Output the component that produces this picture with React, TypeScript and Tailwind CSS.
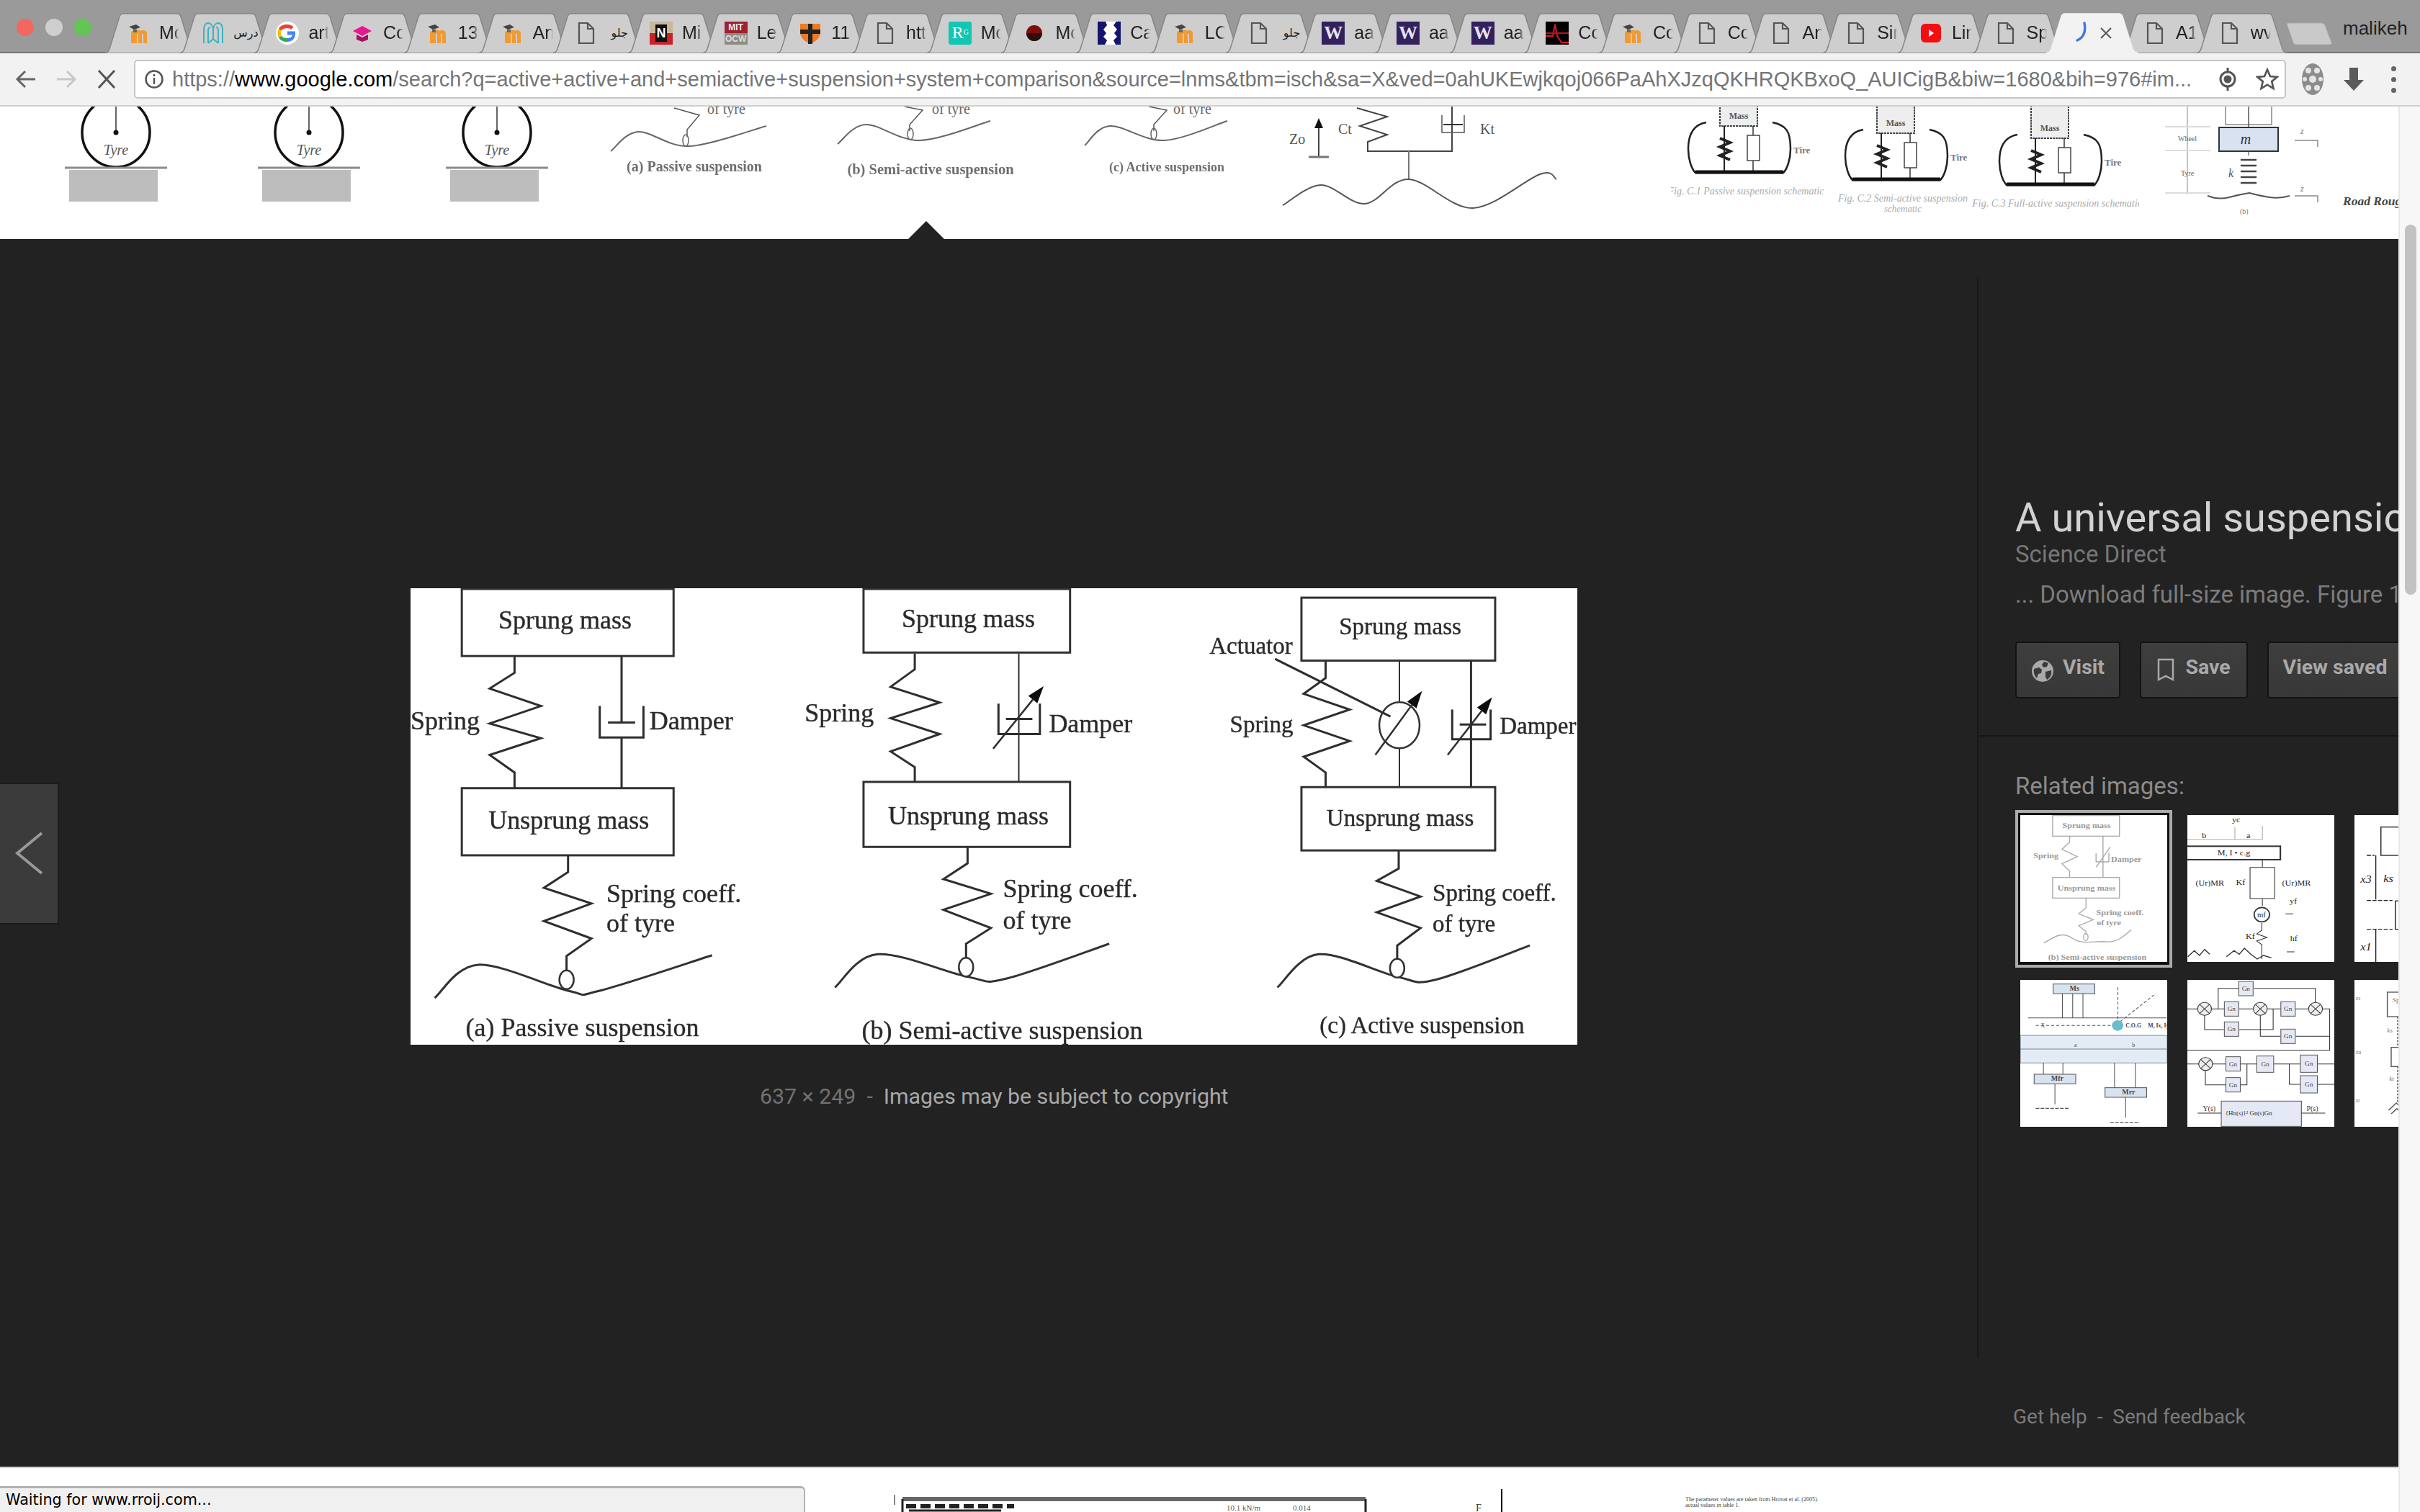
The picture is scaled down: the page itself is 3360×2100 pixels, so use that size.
import type { ReactNode } from 'react'

const SANS = "font-['Liberation_Sans','DejaVu_Sans',sans-serif]"

const pageUrl = '/search?q=active+active+and+semiactive+suspension+system+comparison&source=lnms&tbm=isch&sa=X&ved=0ahUKEwjkqoj066PaAhXJzqQKHRQKBxoQ_AUICigB&biw=1680&bih=976#im...'

type TabInfo = { icon: string; label: string; small?: boolean; active?: boolean }

const tabs: TabInfo[] = [
  { icon: 'moodle', label: 'Moodle' },
  { icon: 'arch', label: 'درس', small: true },
  { icon: 'google', label: 'article' },
  { icon: 'hat', label: 'Course' },
  { icon: 'moodle', label: '13' },
  { icon: 'moodle', label: 'An' },
  { icon: 'doc', label: 'جلو', small: true },
  { icon: 'netflix', label: 'Mi' },
  { icon: 'mit', label: 'Lecture' },
  { icon: 'shield', label: '11.' },
  { icon: 'doc', label: 'http' },
  { icon: 'rg', label: 'Mo' },
  { icon: 'dot', label: 'Mo' },
  { icon: 'wave', label: 'Ca' },
  { icon: 'moodle', label: 'LC' },
  { icon: 'doc', label: 'جلو', small: true },
  { icon: 'w', label: 'aa' },
  { icon: 'w', label: 'aa' },
  { icon: 'w', label: 'aa' },
  { icon: 'ecg', label: 'Co' },
  { icon: 'moodle', label: 'Co' },
  { icon: 'doc', label: 'Co' },
  { icon: 'doc', label: 'An' },
  { icon: 'doc', label: 'Sim' },
  { icon: 'yt', label: 'Lin' },
  { icon: 'doc', label: 'Sp' },
  { icon: 'spin', label: '', active: true },
  { icon: 'doc', label: 'A1' },
  { icon: 'doc', label: 'wv' },
]

function Favicon({ kind }: { kind: string }) {
  const box = 'w-[32px] h-[32px] shrink-0'
  switch (kind) {
    case 'moodle':
      return (
        <svg className={box} viewBox="0 0 32 32">
          <path d="M6 30V16c0-3 3-4 5-3 2-2 7-2 8 0 2-2 9-1 9 3v14h-5V17h-2v13h-5V17h-2v13z" fill="#f39a2e" />
          <path d="M3 7l10-3 6 4-9 3z" fill="#444" />
          <path d="M9 10v5h5v-4z" fill="#666" />
        </svg>
      )
    case 'arch':
      return (
        <svg className={box} viewBox="0 0 32 32" fill="none" stroke="#3fb2c0" strokeWidth="2">
          <path d="M3 30V10c0-5 3-8 6-8s6 3 7 8c1-5 4-8 7-8s6 3 6 8v20" />
          <path d="M9 30V12c0-3 2-4 3-4M23 30V12c0-3-2-4-3-4M16 10v14l-7 6M16 24l7 6" />
        </svg>
      )
    case 'google':
      return (
        <svg className={box} viewBox="0 0 32 32">
          <circle cx="16" cy="16" r="16" fill="#fff" />
          <path d="M16 13.500v5h7c-1 3-3.500 4.500-7 4.500V28c6 0 11-4 11-11 0-1-.1-2.500-.3-3.500z" fill="#4285f4" />
          <path d="M7.500 19.500 4 22.500C6 26 10.500 28 16 28v-5c-4 0-7-1-8.500-3.500z" fill="#34a853" />
          <path d="M7 16c0-1 .2-2.500.6-3.500L4 9.500C3 11.500 2.500 13.500 2.500 16s.5 4.500 1.500 6.500l3.500-3c-.3-1-.5-2.500-.5-3.500z" fill="#fbbc05" />
          <path d="M16 9c2 0 4 .8 5 2l3.500-3.500C22.500 5.500 19.500 4 16 4 10.500 4 6 6 4 9.500l3.600 3C9 10.500 12 9 16 9z" fill="#ea4335" />
        </svg>
      )
    case 'hat':
      return (
        <svg className={box} viewBox="0 0 32 32">
          <path d="M16 6 3 13l13 7 13-7z" fill="#e5198e" />
          <path d="M8 18v7l8 3 8-3v-7l-8 4z" fill="#a50f64" />
        </svg>
      )
    case 'netflix':
      return (
        <div className={`${box} bg-[#c9b79c] relative overflow-hidden flex items-center justify-center`}>
          <div className="absolute bottom-0 left-0 w-full h-[16px] bg-[#c9202a]" />
          <div className="relative w-[16px] h-[24px] bg-[#111] text-white text-[18px] leading-[24px] font-bold text-center">N</div>
        </div>
      )
    case 'mit':
      return (
        <div className={`${box} flex flex-col text-center font-bold text-[12px] leading-[16px] ${SANS}`}>
          <div className="h-[16px] bg-[#a3202f] text-[#eee]">MIT</div>
          <div className="h-[16px] bg-[#8d8d80] text-[#ddd]">OCW</div>
        </div>
      )
    case 'shield':
      return (
        <svg className={box} viewBox="0 0 32 32">
          <path d="M2 3h28v12c0 8-7 13-14 16C9 28 2 23 2 15z" fill="#f07a22" />
          <path d="M16 3v28M2 14h28" stroke="#222" strokeWidth="6" />
        </svg>
      )
    case 'rg':
      return (
        <div className={`${box} bg-[#13c6b4] rounded-[3px] text-white font-['Liberation_Serif',serif] text-[24px] leading-[30px] pl-[5px]`}>
          R<span className="text-[10px] align-top">G</span>
        </div>
      )
    case 'dot':
      return (
        <svg className={box} viewBox="0 0 32 32">
          <circle cx="16" cy="16" r="11" fill="#7d0e0e" />
          <path d="M5 16a11 11 0 0 0 22 0z" fill="#3d0808" />
          <path d="M6 20a11 11 0 0 0 20 0l-4-1-3 3-6-1z" fill="#161616" />
        </svg>
      )
    case 'wave':
      return (
        <svg className={box} viewBox="0 0 32 32">
          <rect width="32" height="32" fill="#14146c" />
          <path d="M11 0h15l-4 5 5 6-4 5 4 5-5 5 3 6H10l3-6-5-5 4-5-4-5 5-6z" fill="#fff" />
        </svg>
      )
    case 'w':
      return (
        <div className={`${box} bg-[#33215e] text-[#e6e1ee] text-[26px] leading-[32px] font-bold text-center font-['Liberation_Serif',serif]`}>W</div>
      )
    case 'ecg':
      return (
        <svg className={box} viewBox="0 0 32 32">
          <rect width="32" height="32" fill="#000" />
          <path d="M0 20h10l3-16 3 16 6 9h10" fill="none" stroke="#d8172b" strokeWidth="2" />
          <path d="M0 16h32" stroke="#b5141f" strokeWidth="2" />
        </svg>
      )
    case 'yt':
      return (
        <svg className={box} viewBox="0 0 32 32">
          <rect x="2" y="3" width="28" height="26" rx="6" fill="#f40d12" />
          <path d="M13 11l7 5-7 5z" fill="#fff" />
        </svg>
      )
    case 'spin':
      return (
        <svg className={box} viewBox="0 0 32 32" fill="none">
          <path d="M22 2c2 10 0 20-10 24" stroke="#3e7bd0" strokeWidth="3.500" strokeLinecap="round" />
        </svg>
      )
    default:
      return (
        <svg className={box} viewBox="0 0 32 32" fill="none" stroke="#555" strokeWidth="2.200">
          <path d="M6 2h12l8 8v20H6z" />
          <path d="M18 2v8h8" />
        </svg>
      )
  }
}

function Tab({ tab }: { tab: TabInfo }) {
  return (
    <div className={`relative w-[128px] h-[56px] shrink-0 -ml-[24.3px] first:ml-[145px] flex items-center pl-[31px] ${tab.active ? 'z-10' : ''}`}>
      <svg className="absolute inset-0" width="128" height="56" viewBox="0 0 128 56">
        <path
          d="M0 56C4 55 6 53 7 50L21 5Q22 1 27 1H100Q105 1 106 5L120 50C121 53 124 55 128 56Z"
          fill={tab.active ? '#f2f2f2' : '#cecece'}
          stroke={tab.active ? '#f2f2f2' : '#868686'}
          strokeWidth="1.500"
        />
      </svg>
      <div className="relative flex items-center gap-[13px]">
        <Favicon kind={tab.icon} />
        {tab.active ? (
          <svg width="16" height="16" viewBox="0 0 16 16" fill="none" stroke="#555" strokeWidth="2" className="-ml-[1px]">
            <path d="M1 1l14 14M15 1 1 15" />
          </svg>
        ) : tab.small ? (
          <span dir="rtl" className="w-[34px] whitespace-nowrap text-[#222] text-[16px] text-center">
            {tab.label}
          </span>
        ) : (
          <span className="w-[28px] overflow-hidden whitespace-nowrap text-[#222] text-[25px] [mask-image:linear-gradient(to_right,#000_75%,transparent)]">
            {tab.label}
          </span>
        )}
      </div>
    </div>
  )
}

function TabStrip() {
  return (
    <div className={`h-[74px] bg-[#9a9a9a] border-b-[2px] border-[#777] flex items-end relative shrink-0 ${SANS}`}>
      <div className="absolute left-[23px] top-[26px] flex gap-[16px]">
        <div className="w-[24px] h-[24px] rounded-full bg-[#f1695e]" />
        <div className="w-[24px] h-[24px] rounded-full bg-[#cfcfcf]" />
        <div className="w-[24px] h-[24px] rounded-full bg-[#62c554]" />
      </div>
      <div className="flex items-end -mb-[2px]">
        {tabs.map((t, i) => (
          <Tab key={i} tab={t} />
        ))}
      </div>
      <svg className="ml-[-3px] mb-[9px] shrink-0" width="64" height="32" viewBox="0 0 64 32">
        <path d="M1 2Q1 1 4 1H50Q53 1 54 4L63 28Q64 31 60 31H14Q11 31 10 28Z" fill="#c9c9c9" stroke="#aaa" />
      </svg>
      <span className="absolute left-[3253px] top-[22px] text-[26px] text-[#222] leading-[34px]">malikeh</span>
    </div>
  )
}

function Toolbar() {
  return (
    <div className={`h-[74px] bg-[#f2f2f2] border-b-[2px] border-[#cfcfcf] flex items-center shrink-0 ${SANS}`}>
      <div className="w-[186px] flex items-center shrink-0">
        <svg className="ml-[20px]" width="32" height="32" viewBox="0 0 32 32" fill="none" stroke="#666" strokeWidth="3">
          <path d="M29 16H5M15 5 4 16l11 11" />
        </svg>
        <svg className="ml-[24px]" width="32" height="32" viewBox="0 0 32 32" fill="none" stroke="#c8c8c8" strokeWidth="3">
          <path d="M3 16h24M17 5l11 11-11 11" />
        </svg>
        <svg className="ml-[24px]" width="32" height="32" viewBox="0 0 32 32" fill="none" stroke="#555" strokeWidth="3">
          <path d="M5 4l22 24M27 4 5 28" />
        </svg>
      </div>
      <div className="w-[2988px] h-[54px] bg-white border-2 border-[#c6c6c6] rounded-[5px] flex items-center relative shrink-0">
        <svg className="ml-[13px] shrink-0" width="26" height="26" viewBox="0 0 26 26" fill="none" stroke="#555" strokeWidth="2.500">
          <circle cx="13" cy="13" r="11.500" />
          <path d="M13 11v9" />
          <path d="M13 6v3" />
        </svg>
        <span className="ml-[12px] text-[29px] text-[#757575] whitespace-nowrap leading-none">
          https://<span className="text-black">www.google.com</span>
          {pageUrl}
        </span>
        <svg className="absolute left-[2889px] top-[9px]" width="32" height="32" viewBox="0 0 32 32" fill="none" stroke="#555" strokeWidth="3">
          <circle cx="16" cy="16" r="10" />
          <circle cx="16" cy="16" r="4" fill="#555" />
          <path d="M16 0v6M16 26v6" />
        </svg>
        <svg className="absolute left-[2944px] top-[9px]" width="32" height="32" viewBox="0 0 36 36" fill="none" stroke="#555" strokeWidth="3">
          <path d="M18 3l4.500 10.500 11 1-8.500 7 2.500 11-9.500-5.800-9.500 5.800 2.500-11-8.500-7 11-1z" />
        </svg>
      </div>
      <svg className="ml-[20px]" width="34" height="48" viewBox="0 0 34 48">
        <ellipse cx="17" cy="24" rx="15" ry="22" fill="#8c8c8c" />
        <circle cx="17" cy="24" r="5" fill="#e5e5e5" />
        <circle cx="11" cy="12" r="4" fill="#e5e5e5" />
        <circle cx="23" cy="12" r="4" fill="#e5e5e5" />
        <circle cx="11" cy="36" r="4" fill="#e5e5e5" />
        <circle cx="23" cy="36" r="4" fill="#e5e5e5" />
        <circle cx="6" cy="24" r="3" fill="#e5e5e5" />
        <circle cx="28" cy="24" r="3" fill="#e5e5e5" />
      </svg>
      <svg className="ml-[24px]" width="32" height="32" viewBox="0 0 32 32">
        <path d="M10 0h12v17h8L16 32 2 17h8z" fill="#5b5b5b" />
      </svg>
      <div className="ml-[36px] flex flex-col gap-[8px]">
        <div className="w-[7px] h-[7px] rounded-full bg-[#666]" />
        <div className="w-[7px] h-[7px] rounded-full bg-[#666]" />
        <div className="w-[7px] h-[7px] rounded-full bg-[#666]" />
      </div>
    </div>
  )
}

// page-coordinate helper: every thumb of the strip above keeps the numbers of the full picture
function StripThumb({ x, w, y = 148, h = 184, className, children }: { x: number; w: number; y?: number; h?: number; className: string; children: ReactNode }) {
  return (
    <svg className={`shrink-0 font-['Liberation_Serif',serif] ${className}`} width={w} height={h} viewBox={`${x} ${y} ${w} ${h}`} fill="none">
      {children}
    </svg>
  )
}

function Tyre({ cx }: { cx: number }) {
  return (
    <>
      <ellipse cx={cx} cy="184" rx="47" ry="48" stroke="#111" strokeWidth="3.500" />
      <path d={`M${cx} 148V184`} stroke="#333" strokeWidth="1.500" />
      <circle cx={cx} cy="184" r="3.500" fill="#111" />
      <text x={cx} y="215" textAnchor="middle" fontSize="20" fontStyle="italic" fill="#555">Tyre</text>
      <path d={`M${cx - 71} 233H${cx + 71}`} stroke="#8a8a8a" strokeWidth="3" />
      <rect x={cx - 65} y="236" width="123" height="44" fill="#bdbdbd" />
    </>
  )
}

const smooth = (p: number[][]) => {
  let d = `M${p[0][0]} ${p[0][1]}`
  for (let i = 0; i < p.length - 1; i++) {
    const a = p[i - 1] ?? p[i]
    const b = p[i]
    const c = p[i + 1]
    const e = p[i + 2] ?? c
    d += `C${b[0] + (c[0] - a[0]) / 6} ${b[1] + (c[1] - a[1]) / 6} ${c[0] - (e[0] - b[0]) / 6} ${c[1] - (e[1] - b[1]) / 6} ${c[0]} ${c[1]}`
  }
  return d
}

function RoadThumb({ road, spring, wheel, tyreX, capX, capY, capSize, caption }: { road: number[][]; spring: string; wheel: number[]; tyreX: number; capX: number; capY: number; capSize: number; caption: string }) {
  return (
    <>
      <path d={smooth(road)} stroke="#666" strokeWidth="2" />
      <path d={`M${spring}`} stroke="#555" strokeWidth="1.500" />
      <ellipse cx={wheel[0]} cy={wheel[1]} rx="4" ry="8" stroke="#666" strokeWidth="1.500" />
      <text x={tyreX} y="158" fontSize="20" fill="#666">of tyre</text>
      <text x={capX} y={capY} textAnchor="middle" fontSize={capSize} fill="#555" fontWeight="bold" opacity="0.85">{caption}</text>
    </>
  )
}

function QuarterCar({ dx, dy, cap1, cap2 }: { dx: number; dy: number; cap1: string; cap2?: string }) {
  return (
    <g transform={`translate(${dx} ${dy})`}>
      <rect x="2388" y="130" width="52" height="45" fill="#eee" stroke="#444" strokeWidth="2" strokeDasharray="3 1" />
      <text x="2414" y="165" textAnchor="middle" fontSize="12" fontWeight="bold" fill="#555">Mass</text>
      <path d="M2394 175V240" stroke="#222" strokeWidth="2" />
      <path d="M2388 192l14 6-14 6 14 6-14 6 14 6" stroke="#222" strokeWidth="4" />
      <path d="M2434 175V240" stroke="#333" strokeWidth="1.500" />
      <rect x="2426" y="188" width="17" height="35" fill="#fff" stroke="#444" strokeWidth="1.500" />
      <path d="M2369 170c-12 2-25 10-25 37 0 15 5 28 10 33h122c5-5 10-18 10-33 0-25-6-33-25-37" stroke="#222" strokeWidth="2.500" />
      <path d="M2354 239H2476" stroke="#111" strokeWidth="5" />
      <text x="2490" y="213" fontSize="13" fontWeight="bold" fill="#777">Tire</text>
      <text x="2424" y="270" textAnchor="middle" fontSize="14" fontStyle="italic" fill="#aaa">{cap1}</text>
      {cap2 && <text x="2424" y="284" textAnchor="middle" fontSize="13" fontStyle="italic" fill="#aaa">{cap2}</text>}
    </g>
  )
}

function ThumbStrip() {
  return (
    <div className="h-[184px] bg-white flex overflow-hidden shrink-0">
      <StripThumb x={85} w={160} className="ml-[85px]"><Tyre cx={161} /></StripThumb>
      <StripThumb x={355} w={160} className="ml-[110px]"><Tyre cx={429} /></StripThumb>
      <StripThumb x={615} w={160} className="ml-[100px]"><Tyre cx={690} /></StripThumb>
      <StripThumb x={840} w={240} className="ml-[65px]">
        <RoadThumb road={[[848, 210], [886, 183], [957, 203], [1064, 175]]} spring="936 150 971 160 954 180V190" wheel={[952, 195]} tyreX={982} capX={964} capY={238} capSize={20} caption="(a) Passive suspension" />
      </StripThumb>
      <StripThumb x={1155} w={260} className="ml-[75px]">
        <RoadThumb road={[[1163, 200], [1202, 173], [1277, 195], [1375, 168]]} spring="1256 148 1281 153 1263 173V182" wheel={[1264, 186]} tyreX={1294} capX={1292} capY={242} capSize={20.500} caption="(b) Semi-active suspension" />
      </StripThumb>
      <StripThumb x={1500} w={215} className="ml-[85px]">
        <RoadThumb road={[[1506, 202], [1541, 175], [1616, 195], [1704, 168]]} spring="1595 148 1620 153 1602 173V182" wheel={[1602, 186]} tyreX={1629} capX={1620} capY={238} capSize={18} caption="(c) Active suspension" />
      </StripThumb>
      <StripThumb x={1775} w={395} className="ml-[60px]">
        <path d="M1831 217V172" stroke="#444" strokeWidth="2" />
        <path d="M1825 178l6-14 6 14z" fill="#111" />
        <path d="M1817 218H1845" stroke="#777" strokeWidth="3" />
        <text x="1790" y="200" fontSize="20" fill="#555">Zo</text>
        <path d="M1884 150 1926 162 1888 175 1926 187 1899 197V210H2016V148" stroke="#444" strokeWidth="2" />
        <text x="1858" y="186" fontSize="20" fill="#555">Ct</text>
        <path d="M2002 160V184H2033V160" stroke="#555" strokeWidth="1.500" />
        <path d="M2004 173H2031" stroke="#333" strokeWidth="2" />
        <text x="2055" y="186" fontSize="20" fill="#555">Kt</text>
        <path d="M1956 210V248" stroke="#777" strokeWidth="2" />
        <path d={smooth([[1781, 285], [1834, 257], [1895, 283], [1956, 249], [2045, 289], [2138, 242], [2161, 249]])} stroke="#555" strokeWidth="2" />
      </StripThumb>
      <StripThumb x={2320} w={215} className="ml-[150px]"><QuarterCar dx={0} dy={0} cap1="Fig. C.1 Passive suspension schematic" /></StripThumb>
      <StripThumb x={2535} w={200} className="ml-0"><QuarterCar dx={218} dy={10} cap1="Fig. C.2 Semi-active suspension" cap2="schematic" /></StripThumb>
      <StripThumb x={2735} w={235} className="ml-0"><QuarterCar dx={432} dy={17} cap1="Fig. C.3 Full-active suspension schematic" /></StripThumb>
      <StripThumb x={2990} w={340} className="ml-[20px]">
        <rect x="3090" y="140" width="64" height="33" stroke="#888" strokeWidth="1.500" />
        <path d="M3122 148V177" stroke="#555" strokeWidth="1.500" />
        <rect x="3081" y="177" width="82" height="33" fill="#d8e2f0" stroke="#333" strokeWidth="2" />
        <text x="3118" y="200" textAnchor="middle" fontSize="20" fontStyle="italic" fill="#333">m</text>
        <path d="M3122 210V216" stroke="#333" />
        <path d="M3112 222h20M3112 230h20M3112 238h20M3112 246h20M3112 254h20" stroke="#444" strokeWidth="2.500" strokeLinecap="round" />
        <text x="3094" y="246" fontSize="16" fontStyle="italic" fill="#555">k</text>
        <path d="M3037 148V270" stroke="#888" />
        <path d="M3006 176H3069M3006 209H3069M3006 268H3069" stroke="#ddd" strokeWidth="2" />
        <text x="3037" y="196" textAnchor="middle" fontSize="10" fill="#666">Wheel</text>
        <text x="3037" y="244" textAnchor="middle" fontSize="10" fill="#666">Tyre</text>
        <path d="M3065 272q15 6 30 2t28-6q14 4 28 6t28-2" stroke="#555" strokeWidth="2" />
        <path d="M3186 195H3218V204M3186 272H3218V281" stroke="#888" strokeWidth="1.500" />
        <text x="3194" y="186" fontSize="12" fontStyle="italic" fill="#777">z</text>
        <text x="3194" y="266" fontSize="12" fontStyle="italic" fill="#777">z</text>
        <text x="3253" y="285" fontSize="17.500" fontStyle="italic" fontWeight="bold" fill="#444">Road Roug</text>
        <text x="3110" y="297" fontSize="10" fill="#777">(b)</text>
      </StripThumb>
    </div>
  )
}

// main picture: numbers read off a 1548x1306 crop, scaled to 1620x634
const X = (z: number) => (z - 10) * 1.0465
const Y = (z: number) => (z - 38) * 0.4855
const line = (p: number[]) => {
  const out: string[] = []
  for (let i = 0; i < p.length; i += 2) out.push(`${X(p[i]).toFixed(1)},${Y(p[i + 1]).toFixed(1)}`)
  return out.join(' ')
}

function L({ p, w = 3 }: { p: number[]; w?: number }) {
  return <polyline points={line(p)} fill="none" stroke="#2e2e2e" strokeWidth={w} strokeLinejoin="miter" />
}

function Box({ x1, x2, y1, y2 }: { x1: number; x2: number; y1: number; y2: number }) {
  return <rect x={X(x1)} y={Y(y1)} width={X(x2) - X(x1)} height={Y(y2) - Y(y1)} fill="none" stroke="#333" strokeWidth="3" />
}

function T({ x, y, mid, size = 36, children }: { x: number; y: number; mid?: boolean; size?: number; children: string }) {
  return (
    <text x={X(x)} y={Y(y) + 2} textAnchor={mid ? 'middle' : 'start'} dominantBaseline="middle" fontSize={size} fill="#2b2b2b" stroke="#2b2b2b" strokeWidth="0.400">
      {children}
    </text>
  )
}

function Arrow({ a, b }: { a: number[]; b: number[] }) {
  const [x1, y1, x2, y2] = [X(a[0]), Y(a[1]), X(b[0]), Y(b[1])]
  const len = Math.hypot(x2 - x1, y2 - y1)
  const ux = (x2 - x1) / len
  const uy = (y2 - y1) / len
  const bx = x2 - ux * 24
  const by = y2 - uy * 24
  return (
    <>
      <line x1={x1} y1={y1} x2={bx} y2={by} stroke="#2e2e2e" strokeWidth="2.500" />
      <polygon points={`${x2},${y2} ${bx - uy * 8},${by + ux * 8} ${bx + uy * 8},${by - ux * 8}`} fill="#111" />
    </>
  )
}

function Wheel({ x, y }: { x: number; y: number }) {
  return <ellipse cx={X(x)} cy={Y(y)} rx="10" ry="13" fill="#fff" stroke="#333" strokeWidth="2.500" />
}

function Road({ p }: { p: number[][] }) {
  return <path d={smooth(p.map(q => [X(q[0]), Y(q[1])]))} fill="none" stroke="#333" strokeWidth="3" />
}

function MainPicture() {
  return (
    <svg className="font-['Liberation_Serif',serif] bg-white shrink-0" width="1620" height="634" viewBox="0 0 1620 634">
      <defs>
        <filter id="soft" x="0" y="0" width="100%" height="100%">
          <feGaussianBlur stdDeviation="0.7" />
        </filter>
      </defs>
      <g filter="url(#soft)">
        <Box x1={78} x2={359} y1={40} y2={232} />
        <Box x1={78} x2={359} y1={610} y2={802} />
        <L p={[148, 232, 148, 280, 115, 325, 183, 375, 115, 425, 183, 467, 115, 515, 148, 565, 148, 610]} />
        <L p={[290, 232, 290, 422]} />
        <L p={[272, 422, 308, 422]} />
        <L p={[261, 375, 261, 465, 319, 465, 319, 375]} />
        <L p={[290, 465, 290, 610]} />
        <L p={[219, 802, 219, 850, 187, 895, 250, 940, 187, 990, 250, 1040, 217, 1090, 217, 1135]} />
        <Road p={[[42, 1210], [100, 1115], [220, 1190], [260, 1190], [410, 1088]]} />
        <Wheel x={217} y={1158} />
        <T x={10} y={420}>Spring</T>
        <T x={327} y={420}>Damper</T>
        <T x={215} y={132} mid>Sprung mass</T>
        <T x={220} y={705} mid>Unsprung mass</T>
        <T x={270} y={915}>Spring coeff.</T>
        <T x={270} y={1000}>of tyre</T>
        <T x={238} y={1297} mid>(a) Passive suspension</T>

        <Box x1={611} x2={885} y1={40} y2={222} />
        <Box x1={611} x2={885} y1={592} y2={778} />
        <L p={[679, 225, 679, 270, 647, 320, 712, 365, 647, 410, 712, 455, 647, 505, 679, 550, 679, 592]} />
        <L p={[817, 225, 817, 592]} w={2} />
        <L p={[790, 368, 790, 455, 845, 455, 845, 368]} />
        <L p={[800, 412, 835, 412]} />
        <Arrow a={[783, 497]} b={[850, 318]} />
        <L p={[749, 778, 749, 825, 717, 870, 780, 912, 717, 958, 780, 1010, 747, 1055, 747, 1098]} />
        <Road p={[[573, 1180], [630, 1085], [750, 1150], [800, 1155], [937, 1055]]} />
        <Wheel x={747} y={1122} />
        <T x={533} y={397}>Spring</T>
        <T x={857} y={428}>Damper</T>
        <T x={750} y={128} mid>Sprung mass</T>
        <T x={750} y={692} mid>Unsprung mass</T>
        <T x={796} y={900}>Spring coeff.</T>
        <T x={796} y={992}>of tyre</T>
        <T x={795} y={1306} mid>(b) Semi-active suspension</T>

        <Box x1={1192} x2={1449} y1={65} y2={245} />
        <Box x1={1192} x2={1449} y1={607} y2={788} />
        <L p={[1224, 245, 1224, 295, 1195, 340, 1256, 385, 1195, 430, 1256, 475, 1195, 520, 1224, 565, 1224, 607]} />
        <L p={[1322, 245, 1322, 365]} w={2} />
        <L p={[1322, 497, 1322, 607]} w={2} />
        <ellipse cx={X(1322)} cy={Y(430)} rx="28" ry="32" fill="none" stroke="#333" strokeWidth="2.500" />
        <Arrow a={[1290, 515]} b={[1352, 332]} />
        <L p={[1417, 245, 1417, 607]} />
        <L p={[1392, 385, 1392, 470, 1443, 470, 1443, 385]} />
        <L p={[1402, 428, 1437, 428]} />
        <Arrow a={[1386, 515]} b={[1445, 350]} />
        <L p={[1157, 240, 1310, 405]} />
        <L p={[1321, 788, 1321, 840, 1292, 875, 1350, 920, 1292, 965, 1350, 1010, 1319, 1060, 1319, 1100]} />
        <Road p={[[1160, 1180], [1215, 1085], [1320, 1150], [1370, 1158], [1495, 1060]]} />
        <Wheel x={1319} y={1125} />
        <T x={1070} y={205} size={33}>Actuator</T>
        <T x={1097} y={430} size={33}>Spring</T>
        <T x={1455} y={435} size={33}>Damper</T>
        <T x={1323} y={150} mid size={33}>Sprung mass</T>
        <T x={1323} y={697} mid size={33}>Unsprung mass</T>
        <T x={1366} y={912} size={33}>Spring coeff.</T>
        <T x={1366} y={1000} size={33}>of tyre</T>
        <T x={1352} y={1292} mid size={33}>(c) Active suspension</T>
      </g>
    </svg>
  )
}

// related thumbs: viewBox is a 572x612 crop so the drawing numbers stay readable
function Rel({ vx, vy, children, className = '' }: { vx: number; vy: number; children: ReactNode; className?: string }) {
  return (
    <svg className={`block shrink-0 bg-white font-['Liberation_Serif',serif] ${className}`} width="204" height="204" viewBox={`${vx} ${vy} 572 612`} preserveAspectRatio="none" fill="none">
      {children}
    </svg>
  )
}

function Related1() {
  return (
    <Rel vx={70} vy={40}>
      <g stroke="#aaa" strokeWidth="4">
        <rect x="196" y="42" width="260" height="86" />
        <rect x="196" y="300" width="260" height="86" />
        <path d="M262 128v25l-30 30 60 30-60 30 30 30v27M392 128v172M365 235V200M365 235h50v-38M365 258l55-85M326 386v40l-28 25 56 25-56 25 28 25v15" />
        <path d="M162 573c40-25 70-50 110-20s90 10 130 15 70-20 100-50" />
        <ellipse cx="325" cy="548" rx="9" ry="15" />
      </g>
      <g fill="#999" fontSize="34" textAnchor="middle" fontWeight="bold">
        <text x="328" y="94">Sprung mass</text>
        <text x="328" y="356">Unsprung mass</text>
        <text x="170" y="220">Spring</text>
        <text x="483" y="234">Damper</text>
        <text x="458" y="456">Spring coeff.</text>
        <text x="415" y="498">of tyre</text>
        <text x="370" y="644">(b) Semi-active suspension</text>
      </g>
    </Rel>
  )
}

function Related2() {
  return (
    <Rel vx={718} vy={40}>
      <g stroke="#333" strokeWidth="3">
        <path d="M718 142H1010M903 90V142M1010 85V142" stroke="#aaa" />
        <rect x="700" y="170" width="380" height="56" strokeWidth="6" />
        <path d="M1010 226v32M962 258h96v130h-96zM1010 388v30M1008 490v30l-20 15 40 15-40 15 20 15v60" />
        <circle cx="1008" cy="455" r="30" strokeWidth="5" />
        <path d="M1100 452h30M1105 610h30" />
        <path d="M720 630l25-25 20 20 20-25 20 20M870 630l30-25 20 15 20-25 25 25 25 20 25-15 30 10" strokeWidth="4" />
      </g>
      <g fill="#222" fontSize="34">
        <text x="835" y="208">M, I • c.g</text>
        <text x="775" y="136">b</text>
        <text x="948" y="136">a</text>
        <text x="1087" y="335">(Ur)MR</text>
        <text x="750" y="335">(Ur)MR</text>
        <text x="907" y="330">Kf</text>
        <text x="945" y="555">Kf</text>
        <text x="990" y="465" fontSize="30">mf</text>
        <text x="1116" y="410">yf</text>
        <text x="1118" y="565">hf</text>
        <text x="892" y="70">yc</text>
      </g>
    </Rel>
  )
}

function Related3() {
  return (
    <Rel vx={1367} vy={40}>
      <g stroke="#222" strokeWidth="4">
        <rect x="1470" y="90" width="200" height="118" />
        <rect x="1526" y="398" width="200" height="118" />
        <path d="M1450 208V392M1450 516V652" />
        <path d="M1415 208h30M1415 396h100M1415 516h100" strokeDasharray="16 6" />
      </g>
      <g fill="#222" fontSize="46" fontStyle="italic">
        <text x="1390" y="322">x3</text>
        <text x="1480" y="318">ks</text>
        <text x="1390" y="605">x1</text>
      </g>
    </Rel>
  )
}

function Related4() {
  return (
    <Rel vx={70} vy={727}>
      <rect x="70" y="958" width="572" height="115" fill="#e3ecf6" stroke="#888" strokeWidth="3" />
      <path d="M70 1015H640" stroke="#555" strokeWidth="2" />
      <g stroke="#555" strokeWidth="3">
        <rect x="198" y="744" width="162" height="40" fill="#d8e3f0" />
        <rect x="124" y="1120" width="162" height="40" fill="#d8e3f0" />
        <rect x="400" y="1176" width="162" height="40" fill="#d8e3f0" />
        <path d="M100 885H640M234 784v100M314 784v100M274 784v100M236 1073v47M160 1073v47M437 1073v103M518 1073v103M205 1160v85M480 1216v85" />
        <path d="M130 1262H260M420 1322H535" strokeWidth="4" strokeDasharray="14 5" />
        <path d="M130 917H430M450 910V750M460 900 590 790" strokeDasharray="12 8" />
      </g>
      <circle cx="449" cy="917" r="22" fill="#68bccb" />
      <g fill="#444" fontSize="28">
        <text x="262" y="773" fontWeight="bold">Ms</text>
        <text x="190" y="1148" fontWeight="bold">Mfr</text>
        <text x="466" y="1205" fontWeight="bold">Mrr</text>
        <text x="480" y="925" fontSize="22" fontWeight="bold">C.O.G</text>
        <text x="567" y="925" fontSize="22" fontWeight="bold">M, Ix, Iy</text>
        <text x="150" y="925" fontSize="22">X</text>
        <text x="280" y="1005" fontSize="22">a</text>
        <text x="505" y="1005" fontSize="22">b</text>
      </g>
    </Rel>
  )
}

function GBox({ x, y, w = 56, h = 60 }: { x: number; y: number; w?: number; h?: number }) {
  return (
    <g>
      <rect x={x} y={y} width={w} height={h} fill="#e5e9f5" stroke="#555" strokeWidth="3" />
      <text x={x + w / 2} y={y + h / 2 + 9} textAnchor="middle" fontSize="26" fill="#444">Gn</text>
    </g>
  )
}

function Sum({ x, y }: { x: number; y: number }) {
  return (
    <g stroke="#333" strokeWidth="3">
      <circle cx={x} cy={y} r="27" fill="#eee" />
      <path d={`M${x - 19} ${y - 19}L${x + 19} ${y + 19}M${x + 19} ${y - 19}L${x - 19} ${y + 19}`} />
    </g>
  )
}

function Related5() {
  return (
    <Rel vx={718} vy={727}>
      <path d="M718 848H1190M838 848V762H918M978 762H1216V820M1243 848H1272V1020H718M785 875V934H860M920 934H1052V848M1002 875V962H1080M1140 962H1272M718 1077H1290M788 1105V1164H868M925 1164H950V1077M1115 1077V1162H1158M1225 1162H1290" stroke="#333" strokeWidth="3" />
      <GBox x={918} y={733} />
      <GBox x={862} y={818} />
      <GBox x={1082} y={818} />
      <GBox x={862} y={902} />
      <GBox x={1082} y={932} />
      <GBox x={868} y={1047} />
      <GBox x={988} y={1044} w={66} h={68} />
      <GBox x={1158} y={1040} w={66} h={72} />
      <GBox x={868} y={1134} />
      <GBox x={1158} y={1126} w={66} h={72} />
      <Sum x={785} y={848} />
      <Sum x={1002} y={848} />
      <Sum x={1217} y={848} />
      <Sum x={789} y={1077} />
      <rect x="850" y="1232" width="312" height="105" fill="#e5e9f5" stroke="#555" strokeWidth="3" />
      <path d="M758 1282H850M1162 1282H1255" stroke="#333" strokeWidth="3" />
      <g fill="#333" fontSize="28">
        <text x="778" y="1272">Y(s)</text>
        <text x="1182" y="1272">P(s)</text>
        <text x="866" y="1292" fontSize="25">{'{Hn(s)}² Gn(s)Gn'}</text>
      </g>
    </Rel>
  )
}

function Related6() {
  return (
    <Rel vx={1367} vy={727}>
      <g stroke="#555" strokeWidth="4">
        <rect x="1495" y="778" width="200" height="102" />
        <rect x="1510" y="1008" width="200" height="80" />
        <path d="M1535 880V1008M1535 1088V1240" strokeDasharray="8 6" />
        <path d="M1500 1270l30-30 30 30M1510 1285l22-22 22 22" />
      </g>
      <g fill="#777" fontSize="26">
        <text x="1515" y="820">Sp</text>
        <text x="1494" y="945" fontStyle="italic">ks</text>
        <text x="1502" y="1148" fontStyle="italic">kt</text>
        <text x="1372" y="812" fontSize="22">zs</text>
        <text x="1372" y="1036" fontSize="22">zu</text>
        <text x="1372" y="1238" fontSize="22">zr</text>
      </g>
    </Rel>
  )
}

function ActionButton({ icon, label, className }: { icon?: ReactNode; label: string; className: string }) {
  return (
    <div className={`h-[79px] shrink-0 flex items-center justify-center gap-[12px] bg-gradient-to-b from-[#3e3e3e] to-[#383838] border-2 border-[#131313] rounded-[4px] text-[#a9a9a9] font-bold text-[28.500px] pb-[6px] ${className}`}>
      {icon}
      {label}
    </div>
  )
}

function InfoPanel() {
  return (
    <div className="w-[585px] shrink-0 pt-[53px] flex flex-col font-[Roboto,sans-serif] overflow-hidden">
      <div className="h-[1501px] shrink-0 flex flex-col border-l-2 border-[#181818] overflow-hidden">
        <div className="pl-[51px] pt-[306px] h-[638px] border-b-2 border-[#161616] shrink-0 overflow-hidden whitespace-nowrap">
          <div className="text-[56px] leading-[56px] text-[#d2d2d2]">A universal suspension system</div>
          <div className="text-[33px] leading-[36px] mt-[5px] text-[#767676]">Science Direct</div>
          <div className="text-[33px] leading-[36px] mt-[20px] text-[#7c7c7c]">... Download full-size image. Figure 1</div>
          <div className="flex mt-[47px] gap-[27px]">
            <ActionButton
              className="w-[146px]"
              label="Visit"
              icon={
                <svg width="32" height="32" viewBox="0 0 32 32" className="mt-[8px]">
                  <circle cx="16" cy="16" r="15" fill="#a9a9a9" />
                  <path d="M4 13l7-2 4 3-1 5-4 1-2 6c-3-3-5-8-4-13zM18 3l6 2-2 5-5 1-2-4zM20 17l8-2c1 5-1 10-6 13l-2-4z" fill="#3a3a3a" />
                </svg>
              }
            />
            <ActionButton
              className="w-[150px]"
              label="Save"
              icon={
                <svg width="24" height="32" viewBox="0 0 24 32" fill="none" stroke="#a9a9a9" strokeWidth="2.500" className="mt-[4px] mr-[3px]">
                  <path d="M2 2h20v28l-10-5-10 5z" />
                </svg>
              }
            />
            <ActionButton className="w-[188px]" label="View saved" />
          </div>
        </div>
        <div className="pl-[51px] pt-[51px] overflow-hidden">
          <div className="text-[33px] leading-[36px] text-[#8b8b8b] h-[58px]">Related images:</div>
          <div className="grid grid-cols-[232px_232px_232px] gap-y-[25px] ml-[7px]">
            <div className="-ml-[7px] -mt-[7px] -mb-[8px] w-[218px] h-[219px] border-[4px] border-[#ababab] bg-[#111] p-[3px]">
              <Related1 />
            </div>
            <Related2 />
            <Related3 />
            <Related4 />
            <Related5 />
            <Related6 />
          </div>
        </div>
      </div>
      <div className="pl-[50px] mt-[64px] text-[28px] leading-[36px] text-[#7b7b7b] whitespace-nowrap">Get help&nbsp; -&nbsp; Send feedback</div>
    </div>
  )
}

export default function App() {
  return (
    <div className="relative w-[3360px] h-[2100px] flex flex-col overflow-hidden bg-white">
      <TabStrip />
      <Toolbar />
      <div className="flex-1 flex min-h-0">
        <div className="w-[3330px] shrink-0 flex flex-col min-w-0">
          <ThumbStrip />
          <div className="h-[1704px] shrink-0 bg-[#222222] flex">
            <div className="w-[2745px] shrink-0 flex flex-col pl-[570px] pt-[485px]">
              <MainPicture />
              <div className="mt-[52px] ml-[485px] text-[30.300px] leading-[40px] font-[Roboto,sans-serif] text-[#727272] whitespace-nowrap">
                637 × 249&nbsp; -&nbsp; <span className="text-[#a8a8a8]">Images may be subject to copyright</span>
              </div>
            </div>
            <InfoPanel />
          </div>
          <div className="flex-1 bg-white border-t-[2px] border-[#555] overflow-hidden flex font-['Liberation_Serif',serif]">
            <svg className="ml-[1235px] shrink-0" width="1400" height="62" viewBox="1235 2038 1400 62" fill="none">
              <path d="M1242 2076V2090" stroke="#888" strokeWidth="2" />
              <path d="M1253 2082H1896" stroke="#666" strokeWidth="6" />
              <path d="M1258 2092h150" stroke="#222" strokeWidth="6" strokeDasharray="14 6" />
              <path d="M1262 2098h128M1896 2082V2100M1253 2082V2100" stroke="#222" strokeWidth="3" />
              <text x="1703" y="2098" fontSize="11" fill="#555">10.1 kN/m</text>
              <text x="1795" y="2098" fontSize="11" fill="#555">0.014</text>
              <path d="M2085 2068V2100" stroke="#111" strokeWidth="2" />
              <text x="2049" y="2099" fontSize="14" fill="#333">F</text>
              <text x="2340" y="2085" fontSize="8" fill="#444">The parameter values are taken from Hrovat et al. (2005).</text>
              <text x="2340" y="2093" fontSize="8" fill="#444">actual values in table 1.</text>
            </svg>
          </div>
        </div>
        <div className="flex-1 bg-[#f7f7f7] border-l-2 border-[#e8e8e8] pt-[164px] pl-[7px]">
          <div className="w-[16px] h-[514px] rounded-full bg-[#c2c2c2]" />
        </div>
      </div>

      {/* previous-image arrow, detail notch and load status sit over the page */}
      <div className="absolute left-0 top-[1087px] w-[82px] h-[197px] bg-[#3b3b3b] border-2 border-l-0 border-[#1b1b1b] rounded-r-[3px] flex items-center pl-[21px] pb-[2px]">
        <svg width="40" height="60" viewBox="0 0 40 60" fill="none" stroke="#999" strokeWidth="4">
          <path d="M37 2 3 30l34 28" />
        </svg>
      </div>
      <svg className="absolute left-[1261px] top-[307px]" width="50" height="25" viewBox="0 0 50 25">
        <path d="M25 0 50 25H0z" fill="#222" />
      </svg>
      <div className="absolute left-0 bottom-0 w-[1118px] h-[36px] bg-[#f0f0f0] border-t-[3px] border-r-[2px] border-[#b2b2b2] rounded-tr-[6px] text-[20.700px] leading-[32px] pl-[8px] text-black font-['DejaVu_Sans',sans-serif]">
        Waiting for www.rroij.com...
      </div>
    </div>
  )
}
